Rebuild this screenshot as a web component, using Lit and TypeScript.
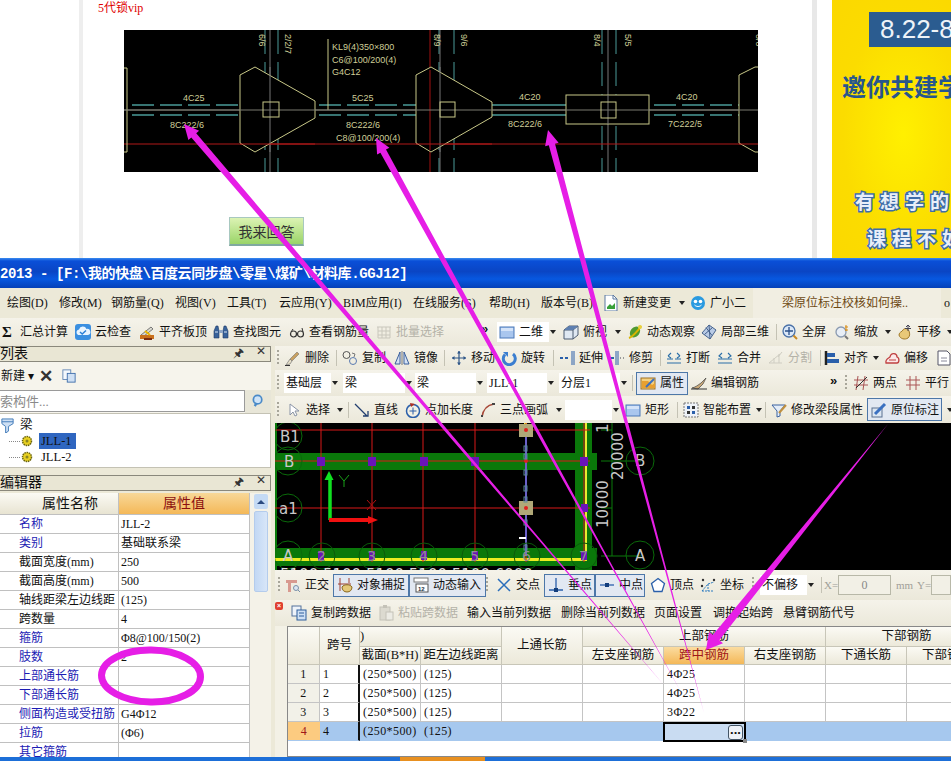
import { LitElement, html, css, svg } from "lit";
import { customElement } from "lit/decorators.js";

const ic: Record<string, any> = {
  cloud: svg`<rect x="0" y="0" width="16" height="16" rx="3" fill="#3b8fe0"/><path d="M3 11a3 3 0 0 1 1-5.6A4 4 0 0 1 11.5 5 3 3 0 0 1 13 11z" fill="#e8f4ff"/><path d="M5 8l2.2 2L11 6.500" stroke="#2b7fd6" stroke-width="1.500" fill="none"/>`,
  level: svg`<path d="M2 11L12 3l2 2L5 12z" fill="#d9d9d0" stroke="#777"/><rect x="1" y="11" width="14" height="4" fill="#c9701c"/><path d="M6 7l5 4" stroke="#e8b400" stroke-width="2"/><path d="M5 15h8" stroke="#7a2c10" stroke-width="2"/>`,
  binoc: svg`<path d="M1 14V7l2-5h2l1 5v7zM15 14V7l-2-5h-2l-1 5v7z" fill="#38629a" stroke="#1f3a66" stroke-width=".6"/><rect x="6" y="6" width="4" height="3" fill="#8fa6c6"/><path d="M2 8h3M11 8h3" stroke="#d8e4f4"/>`,
  glasses: svg`<circle cx="4.500" cy="10" r="3" fill="none" stroke="#333" stroke-width="1.200"/><circle cx="11.500" cy="10" r="3" fill="none" stroke="#333" stroke-width="1.200"/><path d="M7 9.500h2M2 8l2-3M14 8l-1-4" stroke="#333" fill="none"/>`,
  batch: svg`<path d="M1 3h14M2 3v11h12V3M2 7h12M2 11h12M6 3v11M10 3v11" stroke="#c9c7bc" fill="none"/>`,
  rect: svg`<rect x="1" y="3" width="14" height="11" fill="#a9c6ee" stroke="#4a78b8"/><rect x="2" y="4" width="12" height="3" fill="#d4e3f8"/>`,
  cube: svg`<path d="M1 6l5-4h9v9l-5 4H1z" fill="#dfe8f2" stroke="#4a5a70"/><path d="M1 6h9v9M10 6l5-4" stroke="#4a5a70" fill="none"/><path d="M6 2h9l-5 4H1z" fill="#5d7fb0"/>`,
  orbit: svg`<ellipse cx="8" cy="8" rx="4.500" ry="6" transform="rotate(40 8 8)" fill="#4f9a30"/><path d="M2 14C5 13 12 6 14 2" stroke="#d9b400" stroke-width="2" fill="none"/><circle cx="13" cy="3" r="2" fill="#e8d040"/>`,
  part3d: svg`<path d="M8 1l7 5-6 9-8-6z" fill="#b9cbe6" stroke="#46628c"/><path d="M5 3.500l6 8M11.500 3.500l-8 7M8 1l1 14" stroke="#46628c" fill="none"/>`,
  lens: svg`<circle cx="7" cy="7" r="6" fill="#dbe8f8" stroke="#4b72a8" stroke-width="1.300"/><path d="M7 3v8M3 7h8" stroke="#2a4f88" stroke-width="1.300"/><path d="M11.500 11.500L15 15" stroke="#c98a20" stroke-width="2"/>`,
  zoom: svg`<circle cx="7" cy="8" r="5" fill="#e8eef6" stroke="#8a9ab0" stroke-width="1.300"/><path d="M11 12l3 3" stroke="#777" stroke-width="2"/><path d="M12 1v6M11 3h3M11 6h3" stroke="#d88a10"/>`,
  pan: svg`<path d="M2 11c0-3 3-3 4-5 1-2 5-2 6 1 1 3 1 5-1 7-3 2-8 1-9-3z" fill="#e8c878" stroke="#a07828"/><path d="M11 1v6M9 3l2-2 2 2M8 4.500h6" stroke="#445" fill="none"/>`,
  broom: svg`<path d="M12 2l2 2-7 7-2-2z" fill="#c8a060" stroke="#666" stroke-width=".5"/><path d="M5 9l2 2-2 3-4 1z" fill="#e8e0c8" stroke="#777" stroke-width=".7"/><path d="M0 15.500h5" stroke="#333"/>`,
  copy2: svg`<circle cx="4.500" cy="5" r="3.500" fill="none" stroke="#555"/><circle cx="11" cy="11" r="3.500" fill="none" stroke="#5a7ab0"/><path d="M10 3l3 1-1 3" stroke="#777" fill="none"/>`,
  mirror: svg`<path d="M6 2L1 14h5z" fill="#d4e2f4" stroke="#3a5f9c"/><path d="M10 2l5 12h-5z" fill="#d4e2f4" stroke="#3a5f9c"/><path d="M8 1v14" stroke="#777"/>`,
  move: svg`<path d="M8 1v14M1 8h14" stroke="#2d5588" stroke-width="1.200"/><path d="M8 1L6 3.500h4zM8 15l-2-2.500h4zM1 8l2.500-2v4zM15 8l-2.500-2v4z" fill="#2d5588"/>`,
  rot: svg`<path d="M12 4a6 6 0 1 1-8 .5" fill="none" stroke="#3b7ed0" stroke-width="3"/><path d="M2 2h5v5z" fill="#3b7ed0"/>`,
  extend: svg`<path d="M1 8h3M6 8h3" stroke="#2a5faa" stroke-width="2"/><path d="M13 1v14M15 1v14" stroke="#2a5faa"/>`,
  trim: svg`<path d="M1 8h4" stroke="#2a5faa" stroke-width="2"/><path d="M7 1v14M9 1v14" stroke="#2a5faa"/><path d="M11 8h1M14 8h1" stroke="#999" stroke-width="2"/>`,
  brk: svg`<path d="M1 9h6M9 9h6M2 6l3-3M2 6l3 2M14 6l-3-3M14 6l-3 2M1 13h14" stroke="#2a6ea8" fill="none" stroke-width="1.100"/>`,
  merge: svg`<path d="M1 9h14M5 3L2 6l3 2M11 3l3 3-3 2M1 13h14" stroke="#2a6ea8" fill="none" stroke-width="1.100"/>`,
  split: svg`<path d="M1 13L12 4M1 13h13M6 13V8M11 13V4M14 2l-4 5" stroke="#cfcdc2" fill="none"/>`,
  align: svg`<path d="M2 1v14" stroke="#222" stroke-width="2.500"/><rect x="3" y="3" width="8" height="4" fill="#2a5faa"/><rect x="3" y="9" width="12" height="4" fill="#2a5faa"/>`,
  offset: svg`<path d="M2 13c-1-4 3-5 4-6 1-5 7-4 7 0 3 1 2 6 0 6z" fill="#fbe8e8" stroke="#c04040" stroke-width="1.300"/><path d="M5 10h7" stroke="#c04040"/>`,
  doc: svg`<path d="M2 1h9l3 3v11H2z" fill="#fff" stroke="#556"/><path d="M5 8h6M5 11h6" stroke="#889"/>`,
  prop: svg`<rect x="1" y="3" width="14" height="11" fill="#f4d080" stroke="#a07020"/><path d="M2 6h6l4 4 3-2v5H2z" fill="#e8a030"/><path d="M6 12L14 4" stroke="#3a70c0" stroke-width="2"/>`,
  edit: svg`<path d="M1 13c4-1 6-3 9-5l5-5-3 6-5 5z" fill="#c9a878" stroke="#444" stroke-width=".7"/><path d="M0 14h16" stroke="#333"/>`,
  twopt: svg`<path d="M5 1l-2 14M12 1l-2 14M1 5h14M1 10h14" stroke="#a55" fill="none"/><path d="M3 13L14 2" stroke="#333"/>`,
  par: svg`<path d="M5 1v14M11 1v14M1 5h14M1 10h14" stroke="#a55" fill="none"/>`,
  cursor: svg`<path d="M4 2v11l3-3 2 4 2-1-2-4h4z" fill="#fff" stroke="#8a94a6"/>`,
  line: svg`<path d="M1 2l12 12M14 9v5H9" stroke="#223f70" stroke-width="1.300" fill="none"/>`,
  addlen: svg`<circle cx="8" cy="9" r="6.500" fill="#f2f0e4" stroke="#2a5faa" stroke-width="1.500"/><path d="M8 5.500v7M4.500 9h7" stroke="#2a5faa"/><path d="M5 1l5 1-4 3z" fill="#b03020"/>`,
  arc: svg`<path d="M2 15C3 8 7 3 14 2" stroke="#a84838" stroke-width="1.500" fill="none"/><rect x="1" y="13" width="2" height="2" fill="#444"/><rect x="12" y="1" width="3" height="2" fill="#444"/>`,
  smart: svg`<rect x="1" y="1" width="14" height="14" fill="#eef2f8" stroke="#777" stroke-dasharray="2 1"/><rect x="4" y="4" width="3" height="3" fill="#2a5faa"/><rect x="9" y="9" width="3" height="3" fill="#2a5faa"/><rect x="9" y="4" width="3" height="3" fill="#333"/><rect x="4" y="9" width="3" height="3" fill="#333"/>`,
  filter: svg`<path d="M1 3h13L9 9v5l-3 1V9z" fill="#e4edf8" stroke="#3a62a0"/><path d="M8 11l7-8" stroke="#c09040" stroke-width="2"/>`,
  origin: svg`<rect x="1" y="6" width="10" height="9" fill="#dce6f2" stroke="#5a7090"/><path d="M4 12L14 2" stroke="#3a70c0" stroke-width="3"/>`,
  ortho: svg`<path d="M1 3h11v3H6v9H3V6H1z" fill="#d89a90"/><circle cx="11" cy="11" r="2.500" fill="#dce6f2" stroke="#7a90a8"/><path d="M13 13l2 2" stroke="#7a90a8"/>`,
  snap: svg`<path d="M3 1v13M12 1v5" stroke="#a04030" fill="none"/><path d="M1 7l13 0" stroke="#a04030"/><path d="M5 10c2-3 8-3 10 0 0 3-2 5-5 5s-5-2-5-5z" fill="#e4c878" stroke="#8a6820"/>`,
  dyn: svg`<rect x="1" y="1" width="14" height="4" fill="#fff" stroke="#777"/><rect x="3" y="7" width="12" height="8" fill="#fff" stroke="#555"/><text x="5" y="14" font-size="6" font-weight="700" font-family="Liberation Sans" fill="#234">12</text>`,
  cross: svg`<path d="M2 2l12 12M14 2L2 14" stroke="#2a6ebb" stroke-width="1.500"/>`,
  perp: svg`<path d="M8 1v12M1 13h14" stroke="#2a5faa" stroke-width="1.300"/><rect x="6" y="11" width="4" height="4" fill="#123d7c"/>`,
  mid: svg`<path d="M1 8h14" stroke="#2a5faa" stroke-width="1.300"/><rect x="6" y="6" width="4" height="4" fill="#123d7c"/>`,
  vert: svg`<path d="M8 1.500l6.500 5-2.500 8H4l-2.500-8z" fill="#fff" stroke="#2a5faa" stroke-width="1.300"/>`,
  coord: svg`<path d="M2 14L8 7M8 7l6-2M8 7v7M2 14h12" stroke="#2a7abf" stroke-dasharray="2 1" fill="none"/><circle cx="3" cy="3" r="1.200" fill="#333"/><circle cx="14" cy="3" r="1.200" fill="#333"/><circle cx="2" cy="9" r="1.200" fill="#333"/>`,
  cdata: svg`<rect x="1" y="1" width="9" height="10" fill="#eef3fa" stroke="#54729c"/><rect x="6" y="5" width="9" height="10" fill="#cfe0f4" stroke="#2f5f9c"/><path d="M8 8h5M8 11h5" stroke="#2f5f9c"/>`,
  pdata: svg`<rect x="2" y="2" width="10" height="13" fill="#dcdad0" stroke="#c4c2b8"/><rect x="5" y="0" width="4" height="3" fill="#c4c2b8"/><rect x="8" y="7" width="7" height="8" fill="#ecebe4" stroke="#c4c2b8"/>`,
  newdoc: svg`<path d="M2 0h8l4 4v12H2z" fill="#fff" stroke="#5a78a0"/><path d="M10 0v4h4" fill="none" stroke="#5a78a0"/><path d="M4 12l3-3 2 2 3-3v6H4z" fill="#38a038"/>`,
  bot: svg`<circle cx="8" cy="8" r="7" fill="#2a9ae0"/><circle cx="5.500" cy="6.500" r="1.800" fill="#fff"/><circle cx="10.500" cy="6.500" r="1.800" fill="#fff"/><path d="M4.500 10c2 2 5 2 7 0" fill="none" stroke="#fff"/>`,
  tree: svg`<path d="M2 1h12v5l-5 3v5l-3 2V9L2 6z" fill="#cfe0f4" stroke="#3f7ab8"/><path d="M2 4h12" stroke="#3f7ab8"/>`,
  gear: svg`<circle cx="8" cy="8" r="6" fill="#e8d020" stroke="#6a6410" stroke-dasharray="2 1" stroke-width="2"/><circle cx="8" cy="8" r="2" fill="#8a8420"/>`,
  sq: svg`<rect x="1" y="1" width="9" height="11" fill="#f4f8fd" stroke="#5d82b2"/><rect x="6" y="5" width="9" height="10" fill="#cfe0f4" stroke="#3a6aa8"/>`,
  search: svg`<circle cx="7" cy="6" r="4.500" fill="#cfe4f8" stroke="#4a8ac8" stroke-width="1.800"/><path d="M4 13l2-3.500" stroke="#4a8ac8" stroke-width="2.500"/>`,
};

type T = [number, string | null, string | null, string?];
const menu: T[] = [[7, null, "绘图(D)"], [59, null, "修改(M)"], [111, null, "钢筋量(Q)"], [175, null, "视图(V)"], [227, null, "工具(T)"], [279, null, "云应用(Y)"], [343, null, "BIM应用(I)"], [413, null, "在线服务(S)"], [489, null, "帮助(H)"], [541, null, "版本号(B)"], [603, "newdoc", "新建变更"], [678, null, "", "dd"], [690, "bot", "广小二"], [753, null, "梁原位标注校核如何操..", "notice"], [941, null, null], [944, null, "o"], [951, null, null]];
const main: T[] = [[2, null, "Σ", "sig"], [20, null, "汇总计算"], [75, "cloud", "云检查"], [139, "level", "平齐板顶"], [213, "binoc", "查找图元"], [289, "glasses", "查看钢筋量"], [376, "batch", "批量选择", "off"], [481, null, "»", "chev"], [497, "rect", "二维", "wh"], [549, null, "", "dd"], [563, "cube", "俯视"], [614, null, "", "dd"], [627, "orbit", "动态观察"], [701, "part3d", "局部三维"], [776, null, "", "sep"], [782, "lens", "全屏"], [834, "zoom", "缩放"], [884, null, "", "dd"], [897, "pan", "平移"], [946, null, "", "dd"], [951, null, null]];
const rowA: T[] = [[277, null, "", "hnd"], [285, "broom", "删除"], [336, null, "", "sep"], [342, "copy2", "复制"], [394, "mirror", "镜像"], [444, null, "", "sep"], [451, "move", "移动"], [501, "rot", "旋转"], [553, null, "", "sep"], [559, "extend", "延伸"], [609, "trim", "修剪"], [660, null, "", "sep"], [666, "brk", "打断"], [717, "merge", "合并"], [768, "split", "分割", "off"], [820, null, "", "sep"], [824, "align", "对齐"], [872, null, "", "dd"], [884, "offset", "偏移"], [936, "doc", null], [951, null, null]];
const rowB: T[] = [[277, null, "", "hnd"], [284, null, "基础层", "wh"], [331, null, "", "dd"], [343, null, "梁", "wh"], [405, null, "", "dd"], [415, null, "梁", "wh"], [476, null, "", "dd"], [487, null, "JLL-1", "wh"], [547, null, "", "dd"], [559, null, "分层1", "wh"], [620, null, "", "dd"], [632, null, "", "sep"], [636, "prop", "属性", "on"], [688, null, null], [691, "edit", "编辑钢筋"], [830, null, "»", "chev"], [845, null, "", "hnd"], [853, "twopt", "两点"], [905, "par", "平行"], [951, null, null]];
const rowC: T[] = [[277, null, "", "hnd"], [286, "cursor", "选择"], [336, null, "", "dd"], [348, null, "", "sep"], [354, "line", "直线"], [405, "addlen", "点加长度"], [480, "arc", "三点画弧"], [555, null, "", "dd"], [565, null, "", "wh"], [612, null, "", "dd"], [625, "rect", "矩形"], [677, null, "", "sep"], [683, "smart", "智能布置"], [755, null, "", "dd"], [765, null, "", "sep"], [771, "filter", "修改梁段属性"], [867, "origin", "原位标注", "on"], [942, null, null], [946, null, "", "dd"], [951, null, null]];
const rowD: T[] = [[278, null, "", "hnd"], [285, "ortho", "正交"], [333, "snap", "对象捕捉", "on"], [409, "dyn", "动态输入", "on"], [486, null, "", "hnd"], [496, "cross", "交点"], [544, "perp", "垂点", "on"], [595, "mid", "中点", "on"], [645, null, null], [650, "vert", "顶点"], [700, "coord", "坐标"], [752, null, "", "hnd"], [760, null, "不偏移", "wh"], [807, null, "", "dd"], [821, null, "", "sep"], [824, null, "X=", "gr"], [838, null, "0", "inp"], [891, null, null], [896, null, "mm", "gr"], [917, null, "Y=", "gr"], [931, null, "", "inp"], [951, null, null]];
const rowE: T[] = [[291, "cdata", "复制跨数据"], [378, "pdata", "粘贴跨数据", "off"], [467, null, "输入当前列数据"], [561, null, "删除当前列数据"], [654, null, "页面设置"], [713, null, "调换起始跨"], [783, null, "悬臂钢筋代号"], [951, null, null]];

const props: [string, string, boolean][] = [["名称", "JLL-2", true], ["类别", "基础联系梁", true], ["截面宽度(mm)", "250", false], ["截面高度(mm)", "500", false], ["轴线距梁左边线距", "(125)", false], ["跨数量", "4", false], ["箍筋", "Φ8@100/150(2)", true], ["肢数", "2", true], ["上部通长筋", "", true], ["下部通长筋", "", true], ["侧面构造或受扭筋", "G4Φ12", true], ["拉筋", "(Φ6)", true], ["其它箍筋", "", true]];
const spans: [string, string][] = [["1", "4Φ25"], ["2", "4Φ25"], ["3", "3Φ22"], ["4", ""]];

const cadText: [number, number, string][] = [[183, 101, "4C25"], [332, 50, "KL9(4)350×800"], [332, 63, "C6@100/200(4)"], [332, 75, "G4C12"], [352, 101, "5C25"], [170, 128, "8C222/6"], [346, 128, "8C222/6"], [336, 141, "C8@100/200(4)"], [519, 100, "4C20"], [508, 127, "8C222/6"], [676, 100, "4C20"], [668, 127, "7C222/5"]];
const cadV: [number, string][] = [[259, "6/6"], [285, "2/2/7"], [434, "8/9"], [461, "9/6"], [594, "8/4"], [625, "5/5"], [756, "8/8"]];

@customElement("app-root")
export class AppRoot extends LitElement {
  static styles = css`
    :host { display: block; width: 951px; height: 761px; position: relative; overflow: hidden; background: #fff;
      font: 12px/1 "Liberation Serif", "Noto Sans CJK SC", serif; color: #111; }
    svg { display: block; }
    .web { height: 258px; display: flex; background: #fff; }
    .gut { width: 79px; flex: none; }
    .article { width: 714px; flex: none; border-left: 4px solid #eeeeee; border-right: 5px solid #e8e8e8; padding-left: 15px; box-sizing: content-box; display: flex; flex-direction: column; }
    .vip { color: #e00000; font-size: 12px; height: 30px; padding-top: 2px; box-sizing: border-box; }
    .cad { width: 634px; height: 142px; margin-left: 26px; background: #000; flex: none; }
    .cad text { font: 9px "Liberation Sans", sans-serif; fill: #cfcf98; }
    .answer { width: 75px; height: 29px; margin: 45px 0 0 131px; flex: none; box-sizing: border-box; border: 1px solid #a8c8c0; border-bottom: 2px solid #80a8a0; background: linear-gradient(#dcf3b4, #9ad468); color: #333; font: 14px/27px "Noto Sans CJK SC", sans-serif; text-align: center; }
    .ad { margin-left: 15px; flex: 1; background: radial-gradient(ellipse at 60% 52%, #fff000 0%, #fbdc00 60%, #fbd800 100%); overflow: hidden; display: flex; flex-direction: column; }
    .date { margin: 12px 0 0 37px; height: 35px; width: 90px; flex: none; background: #2b5c90; color: #eef3f8; font: 26px/35px "Liberation Sans", sans-serif; padding-left: 11px; white-space: nowrap; }
    .join { margin: 26px 0 0 10px; color: #28568c; font: 700 24px/26px "Noto Sans CJK SC", sans-serif; white-space: nowrap; }
    .w1, .w2 { font: 700 19px/22px "Noto Sans CJK SC", sans-serif; letter-spacing: 6px; white-space: nowrap; color: #e8eef8; -webkit-text-stroke: 3px #3d6ca8; paint-order: stroke fill; }
    .w1 { margin: 91px 0 0 23px; }
    .w2 { margin: 15px 0 0 35px; }

    .title { height: 30px; background: linear-gradient(#3a8cf0 0, #0a4fd8 10%, #0a45c4 45%, #0758e0 70%, #0440b8 100%); color: #fff; font: 700 14px/32px "Liberation Mono", "Noto Sans CJK SC", monospace; white-space: nowrap; overflow: hidden; letter-spacing: -.4px; }
    .bar { display: flex; align-items: center; background: linear-gradient(#f5f3ea, #ebe8da); white-space: nowrap; overflow: hidden; }
    .h30 { height: 30px; background: #ece9d8; }
    .h28 { height: 28px; }
    .it { flex: none; height: 100%; display: flex; align-items: center; gap: 4px; overflow: visible; box-sizing: border-box; }
    .it svg { width: 16px; height: 16px; flex: none; }
    .sig { font-weight: 700; font-size: 15px; }
    .off { color: #b4b2a8; }
    .chev { font: 700 13px "Liberation Sans", sans-serif; align-items: flex-start; padding-top: 3px; }
    .wh { background: #fff; height: 20px; padding-left: 2px; }
    .notice { background: #f1eee2; color: #6e4a14; padding-left: 29px; }
    .gr { color: #a0a098; font-size: 11px; }
    .inp { background: #f2f0e6; border: 1px solid #b8b8a8; height: 20px; justify-content: center; color: #888; }
    .on { background: #e2e8f2; border: 1px solid #4d77a8; height: 23px; padding-left: 3px; }
    .dd::after { content: ""; border: 3px solid transparent; border-top: 4px solid #222; border-bottom: 0; margin-left: 1px; }
    .sep::after { content: ""; width: 1px; height: 16px; background: #c4c2b4; }
    .hnd::after { content: ""; width: 2px; height: 16px; background: repeating-linear-gradient(#a8a69a 0 2px, transparent 2px 4px); }

    .body { display: flex; height: 411px; background: #ece9d8; }
    .left { width: 271px; flex: none; display: flex; flex-direction: column; overflow: hidden; }
    .phead { flex: none; display: flex; align-items: center; justify-content: space-between; border: 1px solid #8a887c; border-left: 0; background: #e9e6d4; font-size: 14px; padding-right: 4px; box-sizing: border-box; height: 16px; }
    .phead .btns { display: flex; gap: 12px; font: 12px "Liberation Sans", sans-serif; color: #333; }
    .newbar { flex: none; height: 28px; display: flex; align-items: center; gap: 5px; background: #f6f4ec; padding-left: 1px; font-size: 12px; }
    .newbar svg { width: 14px; height: 14px; margin-left: 4px; }
    .x { font: 700 17px/1 "Liberation Sans", sans-serif; color: #333; }
    .searchrow { flex: none; height: 23px; display: flex; background: #f6f4ec; }
    .searchbox { width: 245px; height: 22px; background: #fff; border: 1px solid #9a9a9a; border-left: 0; box-sizing: border-box; color: #8a8a8a; font-size: 13px; line-height: 22px; overflow: hidden; white-space: nowrap; }
    .searchbox span { margin-left: -13px; display: inline-block; }
    .searchbtn { flex: 1; display: flex; align-items: center; justify-content: center; background: #e8e6d8; }
    .searchbtn svg { width: 15px; height: 15px; }
    .tree { flex: none; height: 55px; background: #fff; border: 1px solid #c4c2b4; border-left: 0; box-sizing: border-box; display: flex; flex-direction: column; padding: 3px 0 0 2px; }
    .tn { height: 16px; display: flex; align-items: center; padding-left: 7px; font-size: 12.500px; }
    .tn.root { padding-left: 0; gap: 5px; margin-left: -2px; }
    .tn svg { width: 15px; height: 15px; flex: none; }
    .tn .gearicon { width: 12px; height: 12px; margin: 0 6px 0 1px; }
    .tn .lab { width: 37px; padding: 2px 2px; box-sizing: border-box; }
    .tn .sel { background: #2f66c0; color: #111; }
    .dots { width: 11px; border-top: 1px dotted #888; }
    .gap7 { height: 7px; flex: none; }
    .gap2 { height: 2px; flex: none; }
    .grid { flex: 1; min-height: 0; display: flex; background: #fff; overflow: hidden; }
    .ptable { width: 250px; flex: none; display: grid; grid-template-columns: 119px 131px; grid-template-rows: 22px; grid-auto-rows: 19px; align-content: start; }
    .ph { display: flex; align-items: center; justify-content: center; font-size: 14px; background: linear-gradient(#fbfaf4, #e8e4d2); border-bottom: 1px solid #c0c0c0; border-right: 1px solid #c0c0c0; box-sizing: border-box; padding-left: 22px; }
    .ph.v { background: linear-gradient(#f8d898, #f4b858); color: #8c1010; padding-left: 0; }
    .pc { display: flex; align-items: center; box-sizing: border-box; border-bottom: 1px solid #c0c0c0; border-right: 1px solid #c0c0c0; padding-left: 2px; font-size: 12px; overflow: hidden; white-space: nowrap; }
    .pn { padding-left: 19px; }
    .blue { color: #1c1cb4; }
    .sb { flex: 1; background: #f4f2e8; padding: 1px 3px 0 4px; display: flex; flex-direction: column; gap: 2px; }
    .sbtn { height: 15px; border-radius: 2px; background: #c4daf4; flex: none; display: flex; align-items: center; justify-content: center; }
    .sbtn::after { content: ""; border: 4px solid transparent; border-bottom: 4px solid #2a4a80; border-top: 0; }
    .sth { height: 79px; flex: none; background: linear-gradient(90deg, #c2d8f4, #d8e6f8); border: 1px solid #b4ccec; border-radius: 2px; }
    .gapx { width: 4px; flex: none; background: #ece9d8; }

    .right { flex: 1; min-width: 0; display: flex; flex-direction: column; overflow: hidden; }
    .ra { height: 24px; flex: none; }
    .rb { height: 26px; flex: none; }
    .rc { height: 27px; flex: none; }
    .rd { height: 30px; flex: none; }
    .re { height: 26px; flex: none; }
    .canvas { width: 676px; height: 147px; flex: none; background: #000; }
    .canvas text { font: 15px "DejaVu Sans", sans-serif; fill: #c8c8c8; }
    .tablewrap { flex: 1; display: flex; min-height: 0; background: #f3f1e6; }
    .tleft { width: 12px; flex: none; }
    .ttable { flex: 1; min-width: 0; border: 1px solid #888; border-right: 0; background: #fff; overflow: hidden; position: relative; display: grid; grid-template-columns: 32px 40px 61px 81px 81px 81px 81px 81px 81px 81px; grid-template-rows: 20px 18px repeat(4, 19px); align-content: start; }
    .th { display: flex; align-items: center; justify-content: center; background: linear-gradient(#fbfaf4, #ece9da); border-right: 1px solid #c8c6b8; border-bottom: 1px solid #c8c6b8; box-sizing: border-box; font-size: 12.500px; white-space: nowrap; overflow: hidden; }
    .th.lf { justify-content: flex-start; }
    .r2 { grid-row: span 2; }
    .c2 { grid-column: span 2; }
    .c3 { grid-column: span 3; }
    .th.hot { background: linear-gradient(#fbdca0, #f4b858); color: #a01818; }
    .td { display: flex; align-items: center; box-sizing: border-box; border-right: 1px solid #c4c4c4; border-bottom: 1px solid #c4c4c4; padding-left: 3px; font-size: 12px; white-space: nowrap; letter-spacing: .4px; }
    .td.n { justify-content: center; background: #f2f1e8; padding: 0; }
    .td.fz { border-right: 2px solid #111; }
    .td.s { background: #a6c8ee; border-right: 0; border-bottom-color: #a6c8ee; }
    .td.s.fz { border-right: 2px solid #111; }
    .td.n.s { background: #fccb80; color: #a01818; }
    .td.cur { background: #c9dcf2; border: 2px solid #000; position: relative; justify-content: flex-end; padding: 0 1px 0 0; margin: 0 -1px -1px -1px; }
    .more { width: 15px; height: 15px; border: 1px solid #456; border-radius: 3px; background: #eef2f8; box-sizing: border-box; font: 700 13px/7px "Liberation Sans", sans-serif; text-align: center; letter-spacing: 0; }
    .grip { position: absolute; right: -3px; bottom: -3px; width: 4px; height: 4px; background: #888; }
    .close { width: 8px; height: 8px; margin: -24px 0 0 0; background: #e04030; border-radius: 2px; color: #fff; font: 700 7px/8px "Liberation Sans"; text-align: center; position: relative; left: 0; }
    .status { height: 4px; background: #1d6fd8; display: flex; }
    .status i { width: 85px; margin-left: 400px; background: #e89020; }
    .ink { position: absolute; left: 0; top: 0; width: 951px; height: 761px; pointer-events: none; }
  `;

  row(items: T[], origin: number, cls: string) {
    const body = items.slice(0, -1).map((t, i) => {
      const w = items[i + 1][0] - t[0];
      return html`<span class="it ${t[3] ?? ""}" style="width:${w}px">${t[1] ? html`<svg viewBox="0 0 16 16">${ic[t[1]]}</svg>` : ""}${t[2] ?? ""}</span>`;
    });
    return html`<div class="bar ${cls}" style="padding-left:${items[0][0] - origin}px">${body}</div>`;
  }

  canvas() {
    const vs = [321, 372, 423, 475, 526, 584];
    const labels: [number, string][] = [[322, "2"], [372, "3"], [424, "4"], [475, "5"], [527, "6"], [584, "7"]];
    return html`<svg class="canvas" viewBox="275 423 676 147">
      <rect x="275" y="423" width="2" height="147" fill="#0a7a0a"/>
      <rect x="275" y="453" width="322" height="17" fill="#0a780a"/>
      <rect x="275" y="548" width="322" height="18" fill="#0a780a"/>
      <rect x="575" y="423" width="17" height="147" fill="#0a780a"/>
      <rect x="275" y="558" width="312" height="3" fill="#ecec20"/>
      <rect x="585" y="423" width="2" height="137" fill="#e8ec30"/>
      <rect x="524" y="423" width="3" height="8" fill="#e8ec30"/>
      ${[430, 461, 508].map(y => svg`<line x1="275" x2="590" y1=${y} y2=${y} stroke="#d81818"/>`)}
      ${vs.map(x => svg`<line x1=${x} x2=${x} y1="423" y2="562" stroke="#d81818"/>`)}
      <line x1="526" x2="526" y1="430" y2="556" stroke="#6a60c8" stroke-width="2"/>
      <rect x="519" y="424" width="14" height="13" fill="#b0a878"/>
      <rect x="519" y="501" width="14" height="14" fill="#b0a878"/>
      <circle cx="526" cy="430" r="2" fill="#e02020"/><circle cx="526" cy="508" r="2" fill="#e02020"/><circle cx="526" cy="461" r="2" fill="#e02020"/>
      ${[321, 372, 424, 475, 584].map(x => svg`<rect x=${x - 4} y="457" width="8" height="9" fill="#6a14b8"/>`)}
      <rect x="581" y="504" width="7" height="8" fill="#6a14b8"/>
      ${[321, 372, 424, 475, 584].map(x => svg`<rect x=${x - 3} y="551" width="6" height="9" fill="#6a14b8"/>`)}
      ${[446, 454, 470, 486, 497, 520, 545].map(y => svg`<rect x="524" y=${y} width="3" height="5" fill="none" stroke="#5a8a9a"/>`)}
      <rect x="519" y="537" width="7" height="2" fill="#fff"/>
      <path d="M330 520V478" stroke="#10e020" stroke-width="3.500"/><path d="M329 471l-4.500 9h9z" fill="#10e020"/>
      <path d="M329 520h44" stroke="#f01010" stroke-width="4"/><path d="M378 520l-10-4v8z" fill="#f01010"/>
      <path d="M339 475l5 6 5-6M344 481v6" stroke="#18a018" fill="none"/>
      <path d="M367 500l9 10M376 500l-9 10" stroke="#b01010" fill="none"/>
      <path d="M601 430h11M601 461h40M601 508h11M601 556h40M612 423v133" stroke="#0a7a0a" fill="none"/>
      ${[[288, 436], [288, 461], [288, 508], [288, 555], [640, 461], [640, 555]].map(([x, y]) => svg`<circle cx=${x} cy=${y} r="14" fill="none" stroke="#0a6a0a"/>`)}
      ${labels.map(([x]) => svg`<circle cx=${x} cy="556" r="13" fill="none" stroke="#0a5a0a"/>`)}
      <text x="280" y="442">B1</text><text x="284" y="467">B</text><text x="279" y="514">a1</text><text x="283" y="561">A</text>
      <text x="635" y="466">B</text><text x="635" y="561">A</text>
      ${labels.map(([x, t]) => svg`<text x=${x - 5} y="561" style="font-size:14px;fill:#909090">${t}</text>`)}
      <text transform="translate(608 433) rotate(-90)">1</text>
      <text transform="translate(623 480) rotate(-90)">20000</text>
      <text transform="translate(608 528) rotate(-90)">10000</text>
      <text x="280" y="580" style="fill:#ddd">5100 5100 5100 5100 5100 6900</text>
    </svg>`;
  }

  cad() {
    const c = "#c8c888", t = "#4a9a98";
    const dashH = (x1: number, x2: number) => svg`<path d="M${x1} 105H${x2}M${x1} 115H${x2}" stroke=${t} stroke-width="1.300" stroke-dasharray="22 6"/>`;
    const dashV = (x: number) => svg`<path d="M${x} 30V172" stroke=${t} stroke-dasharray="24 8"/>`;
    return html`<svg class="cad" viewBox="124 30 634 142">
      ${[265, 278, 439, 454, 602, 616].map(dashV)}
      <path d="M270 30V172M440 30V172M608 30V172" stroke="#777" fill="none"/>
      <path d="M430 30V172" stroke="#a01010"/>
      ${dashH(132, 240)}${dashH(319, 416)}${dashH(654, 740)}
      <path d="M491 105H566M491 115H566" stroke=${t} stroke-width="1.300"/>
      <path d="M124 110H758" stroke="#7a7a70"/>
      <path d="M124 144H758" stroke="#b01818"/>
      <path d="M124 68h3v84h-3M328 39V110" fill="none" stroke=${c}/>
      <g fill="#000" stroke=${c}>
        <path d="M240 75l15-8 60 34v17l-60 34-15-9z"/>
        <path d="M416 75l15-8 61 35v15l-61 35-15-9z"/>
        <rect x="566" y="95" width="83" height="29"/>
        <path d="M739 75l16-8h4v85h-4l-16-9z"/>
      </g>
      <path d="M270 67V152M440 67V152M608 95V124" stroke="#777"/><path d="M430 70V150" stroke="#a01010"/>
      <path d="M124 110H758" stroke="#7a7a70"/>
      <path d="M416 144H492M240 144H315M739 144H758" stroke="#b01818"/>
      <g fill="none" stroke=${c}><rect x="263" y="102" width="16" height="15"/><rect x="440" y="102" width="15" height="15"/><rect x="601" y="102" width="15" height="16"/></g>
      ${cadText.map(([x, y, s]) => svg`<text x=${x} y=${y}>${s}</text>`)}
      ${cadV.map(([x, s]) => svg`<text transform="translate(${x} 30) rotate(90)" y="0" x="4">${s}</text>`)}
    </svg>`;
  }

  taper(x1: number, y1: number, x2: number, y2: number, w: number, hw: number, hl: number) {
    const dx = x2 - x1, dy = y2 - y1, L = Math.hypot(dx, dy), ux = dx / L, uy = dy / L, nx = -uy, ny = ux;
    const bx = x2 - ux * hl, by = y2 - uy * hl;
    const p = [[x1, y1], [bx + nx * w, by + ny * w], [bx + nx * hw, by + ny * hw], [x2, y2], [bx - nx * hw, by - ny * hw], [bx - nx * w, by - ny * w]];
    return svg`<polygon points=${p.map(q => q.map(v => v.toFixed(1)).join(",")).join(" ")} fill="#e61ee6"/>`;
  }

  render() {
    return html`
      <div class="web">
        <div class="gut"></div>
        <div class="article">
          <div class="vip">5代锁vip</div>
          ${this.cad()}
          <div class="answer">我来回答</div>
        </div>
        <div class="ad">
          <div class="date">8.22-8</div>
          <div class="join">邀你共建学习</div>
          <div class="w1">有想学的人</div>
          <div class="w2">课程不如</div>
        </div>
      </div>
      <div class="title">2013 - [F:\\我的快盘\\百度云同步盘\\零星\\煤矿\\材料库.GGJ12]</div>
      ${this.row(menu, 0, "h30")}
      ${this.row(main, 0, "h28")}
      <div class="body">
        <div class="left">
          <div class="phead"><span>列表</span><span class="btns"><span>🖈</span><span>✕</span></span></div>
          <div class="newbar"><span>新建 ▾</span><span class="x">✕</span><svg viewBox="0 0 16 16">${ic.sq}</svg></div>
          <div class="searchrow"><div class="searchbox"><span>搜索构件...</span></div><div class="searchbtn"><svg viewBox="0 0 16 16">${ic.search}</svg></div></div>
          <div class="tree">
            <div class="tn root"><svg viewBox="0 0 16 16">${ic.tree}</svg>梁</div>
            <div class="tn"><i class="dots"></i><svg class="gearicon" viewBox="0 0 16 16">${ic.gear}</svg><span class="lab sel">JLL-1</span></div>
            <div class="tn"><i class="dots"></i><svg class="gearicon" viewBox="0 0 16 16">${ic.gear}</svg><span class="lab">JLL-2</span></div>
          </div>
          <div class="gap7"></div>
          <div class="phead"><span>编辑器</span><span class="btns"><span>🖈</span><span>✕</span></span></div>
          <div class="gap2"></div>
          <div class="grid">
            <div class="ptable">
              <div class="ph">属性名称</div><div class="ph v">属性值</div>
              ${props.map(([n, v, b]) => html`<div class="pc pn ${b ? "blue" : ""}">${n}</div><div class="pc">${v}</div>`)}
            </div>
            <div class="sb"><div class="sbtn"></div><div class="sth"></div></div>
          </div>
        </div>
        <div class="gapx"></div>
        <div class="right">
          ${this.row(rowA, 275, "ra")}
          ${this.row(rowB, 275, "rb")}
          ${this.row(rowC, 275, "rc")}
          ${this.canvas()}
          ${this.row(rowD, 275, "rd")}
          ${this.row(rowE, 275, "re")}
          <div class="tablewrap">
            <div class="tleft"><div class="close">×</div></div>
            <div class="ttable">
              <div class="th r2"></div>
              <div class="th r2">跨号</div>
              <div class="th c2 lf">)</div>
              <div class="th r2">上通长筋</div>
              <div class="th c3">上部钢筋</div>
              <div class="th c2">下部钢筋</div>
              <div class="th">截面(B*H)</div><div class="th">距左边线距离</div>
              <div class="th">左支座钢筋</div><div class="th hot">跨中钢筋</div><div class="th">右支座钢筋</div><div class="th">下通长筋</div><div class="th">下部钢筋</div>
              ${spans.map(([n, v]) => {
                const s = n === "4" ? "s" : "";
                return html`
                  <div class="td n ${s}">${n}</div>
                  <div class="td fz ${s}">${n}</div>
                  <div class="td ${s}">(250*500)</div>
                  <div class="td ${s}">(125)</div>
                  <div class="td ${s}"></div>
                  <div class="td ${s}"></div>
                  ${s ? html`<div class="td cur"><div class="more">...</div><i class="grip"></i></div>` : html`<div class="td">${v}</div>`}
                  <div class="td ${s}"></div><div class="td ${s}"></div><div class="td ${s}"></div>`;
              })}
            </div>
          </div>
        </div>
      </div>
      <div class="status"><i></i></div>
      <svg class="ink" viewBox="0 0 951 761">
        ${this.taper(663, 684, 184, 124, 3.2, 7, 15)}
        ${this.taper(681, 692, 376, 138, 3.2, 7, 15)}
        ${this.taper(704, 713, 548, 130, 3.2, 7, 15)}
        ${this.taper(888, 424, 706, 650, 4.2, 9, 16)}
        <ellipse cx="151" cy="676" rx="49.500" ry="26" fill="none" stroke="#e61ee6" stroke-width="7" transform="rotate(1 151 676)"/>
      </svg>
    `;
  }
}
